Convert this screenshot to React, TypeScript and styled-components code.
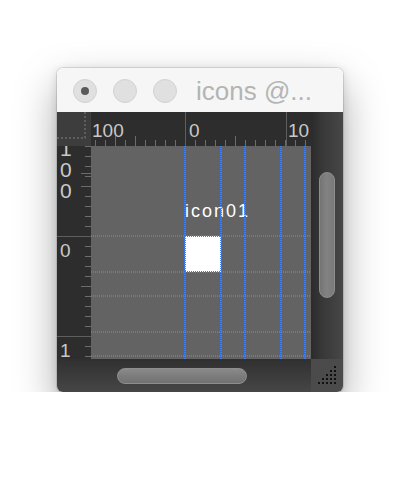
import styled, { createGlobalStyle } from "styled-components";

const ORIGIN_X = 94;
const ORIGIN_Y = 90;
const GUIDES = [0, 36, 60, 96, 120];

const GlobalStyle = createGlobalStyle`
  html, body {
    margin: 0;
    padding: 0;
    background: #ffffff;
  }
  body {
    font-family: "Liberation Sans", Arial, sans-serif;
  }
`;

const Page = styled.div`
  padding: 68px 0 0 57px;
`;

const Window = styled.div`
  width: 286px;
  border-radius: 6px;
  overflow: hidden;
  box-shadow: 0 0 0 1px rgba(0, 0, 0, 0.1), 0 18px 42px rgba(0, 0, 0, 0.34),
    0 2px 10px rgba(0, 0, 0, 0.14);
`;

const TitleBar = styled.div`
  height: 44px;
  box-sizing: border-box;
  padding: 2px 16px 0;
  display: flex;
  align-items: center;
  gap: 16px;
  background: #f6f6f6;
`;

const Light = styled.span<{ $dot?: boolean }>`
  width: 24px;
  height: 24px;
  box-sizing: border-box;
  border-radius: 50%;
  background: #e0e0e0;
  border: 1px solid #d2d2d2;
  display: flex;
  align-items: center;
  justify-content: center;
  flex-shrink: 0;

  &::after {
    content: "";
    display: ${(p) => (p.$dot ? "block" : "none")};
    width: 8px;
    height: 8px;
    border-radius: 50%;
    background: #5a5a5a;
  }
`;

const Title = styled.span`
  margin-left: 3px;
  font-size: 26px;
  line-height: 30px;
  color: #b4b4b4;
  white-space: nowrap;
`;

const Body = styled.div`
  display: grid;
  grid-template-columns: 254px 32px;
  grid-template-rows: 247px 33px;
`;

const Main = styled.div`
  display: grid;
  grid-template-columns: 34px 220px;
  grid-template-rows: 34px 213px;
`;

const Corner = styled.div`
  position: relative;
  background: #3d3d3d;

  &::before {
    content: "";
    position: absolute;
    left: 27px;
    top: 0;
    height: 27px;
    width: 2px;
    background: repeating-linear-gradient(to bottom, #5e5e5e 0 2px, transparent 2px 4px);
  }
  &::after {
    content: "";
    position: absolute;
    left: 0;
    top: 25px;
    width: 29px;
    height: 2px;
    background: repeating-linear-gradient(to right, #5e5e5e 0 2px, transparent 2px 4px);
  }
`;

const HRuler = styled.div`
  position: relative;
  overflow: hidden;
  background: #2d2d2d;
`;

const HTicks = styled.div<{ $len: number; $step: number; $offset: number }>`
  position: absolute;
  left: 0;
  right: 0;
  bottom: 0;
  height: ${(p) => p.$len}px;
  background: repeating-linear-gradient(
    to right,
    #6c6c6c 0 1px,
    transparent 1px ${(p) => p.$step}px
  );
  background-position: ${(p) => p.$offset}px 0;
`;

const HMajor = styled.div<{ $x: number }>`
  position: absolute;
  top: 0;
  bottom: 0;
  left: ${(p) => p.$x}px;
  width: 1px;
  background: #5e5e5e;
`;

const HLabel = styled.span<{ $x: number }>`
  position: absolute;
  top: 9px;
  left: ${(p) => p.$x}px;
  font-size: 19px;
  line-height: 19px;
  color: #c8c8c8;
  white-space: nowrap;
`;

const VRuler = styled.div`
  position: relative;
  overflow: hidden;
  background: #2d2d2d;
`;

const VTicks = styled.div<{ $len: number; $step: number; $offset: number }>`
  position: absolute;
  top: 0;
  bottom: 0;
  right: 0;
  width: ${(p) => p.$len}px;
  background: repeating-linear-gradient(
    to bottom,
    #6c6c6c 0 1px,
    transparent 1px ${(p) => p.$step}px
  );
  background-position: 0 ${(p) => p.$offset}px;
`;

const VMajor = styled.div<{ $y: number }>`
  position: absolute;
  left: 0;
  right: 0;
  top: ${(p) => p.$y}px;
  height: 1px;
  background: #5e5e5e;
`;

const VLabel = styled.span<{ $y: number; $size?: number }>`
  position: absolute;
  left: 3px;
  top: ${(p) => p.$y}px;
  display: flex;
  flex-direction: column;
  font-size: ${(p) => p.$size ?? 19}px;
  line-height: ${(p) => (p.$size ? 21 : 20)}px;
  color: #c8c8c8;
`;

const Canvas = styled.div`
  position: relative;
  overflow: hidden;
  background: #636363;
`;

const GuideV = styled.div<{ $x: number }>`
  position: absolute;
  top: 0;
  bottom: 0;
  left: ${(p) => p.$x - 1}px;
  width: 2px;
  background: repeating-linear-gradient(to bottom, #3f7ef4 0 1px, transparent 1px 2px);
`;

const GuideH = styled.div<{ $y: number }>`
  position: absolute;
  left: 0;
  right: 0;
  top: ${(p) => p.$y - 1}px;
  height: 2px;
  background: repeating-linear-gradient(to right, #3f7ef4 0 1px, transparent 1px 2px);
`;

const Node = styled.div<{ $x: number; $y: number }>`
  position: absolute;
  left: ${(p) => p.$x}px;
  top: ${(p) => p.$y}px;
  width: 36px;
  height: 36px;
  background: #ffffff;
`;

const NodeLabel = styled.span<{ $x: number; $y: number }>`
  position: absolute;
  left: ${(p) => p.$x}px;
  top: ${(p) => p.$y}px;
  font-size: 18px;
  line-height: 20px;
  letter-spacing: 2px;
  color: #ffffff;
  white-space: nowrap;
`;

const VTrack = styled.div`
  box-sizing: border-box;
  padding: 60px 0 0 8px;
  background: linear-gradient(to right, #2b2b2b, #383838 35%, #424242 80%, #474747);
`;

const VThumb = styled.div`
  width: 16px;
  height: 126px;
  box-sizing: border-box;
  border-radius: 8px;
  border: 1px solid #8e8e8e;
  background: linear-gradient(to right, #747474, #828282 45%, #7a7a7a);
`;

const HTrack = styled.div`
  box-sizing: border-box;
  padding: 9px 0 0 60px;
  background: linear-gradient(to bottom, #303030, #3a3a3a 45%, #464646);
`;

const HThumb = styled.div`
  width: 130px;
  height: 16px;
  box-sizing: border-box;
  border-radius: 8px;
  border: 1px solid #8e8e8e;
  background: linear-gradient(to bottom, #8a8a8a, #7c7c7c 50%, #727272);
`;

const Grip = styled.div`
  display: flex;
  align-items: flex-end;
  justify-content: flex-end;
  padding: 0 7px 8px 0;
  background: #4b4b4b;
`;

const GripIcon = () => {
  const dots = [];
  for (let r = 0; r < 5; r++) {
    for (let c = 4 - r; c < 5; c++) {
      dots.push(<rect key={`${r}-${c}`} x={c * 4} y={r * 4} width={2} height={2} fill="#111" />);
    }
  }
  return (
    <svg width="18" height="18" viewBox="0 0 18 18">
      {dots}
    </svg>
  );
};

const Digits = ({ text }: { text: string }) => (
  <>
    {text.split("").map((ch, i) => (
      <span key={i}>{ch}</span>
    ))}
  </>
);

export default function App() {
  return (
    <>
      <GlobalStyle />
      <Page>
        <Window>
          <TitleBar>
            <Light $dot />
            <Light />
            <Light />
            <Title>icons @...</Title>
          </TitleBar>
          <Body>
            <Main>
              <Corner />
              <HRuler>
                <HTicks $len={6} $step={10} $offset={ORIGIN_X % 10} />
                <HTicks $len={10} $step={100} $offset={(ORIGIN_X + 50) % 100} />
                <HMajor $x={ORIGIN_X} />
                <HMajor $x={ORIGIN_X + 101} />
                <HLabel $x={1}>100</HLabel>
                <HLabel $x={ORIGIN_X + 4}>0</HLabel>
                <HLabel $x={ORIGIN_X + 103}>10</HLabel>
              </HRuler>
              <VRuler>
                <VTicks $len={6} $step={10} $offset={ORIGIN_Y % 10} />
                <VTicks $len={10} $step={100} $offset={(ORIGIN_Y + 50) % 100} />
                <VMajor $y={ORIGIN_Y} />
                <VMajor $y={ORIGIN_Y + 100} />
                <VLabel $y={-8} $size={21}>
                  <Digits text="100" />
                </VLabel>
                <VLabel $y={ORIGIN_Y + 5}>
                  <Digits text="0" />
                </VLabel>
                <VLabel $y={ORIGIN_Y + 105}>
                  <Digits text="1" />
                </VLabel>
              </VRuler>
              <Canvas>
                <NodeLabel $x={ORIGIN_X} $y={ORIGIN_Y - 35}>
                  icon01
                </NodeLabel>
                <Node $x={ORIGIN_X} $y={ORIGIN_Y} />
                {GUIDES.map((g) => (
                  <GuideV key={`v${g}`} $x={ORIGIN_X + g} />
                ))}
                {GUIDES.map((g) => (
                  <GuideH key={`h${g}`} $y={ORIGIN_Y + g} />
                ))}
              </Canvas>
            </Main>
            <VTrack>
              <VThumb />
            </VTrack>
            <HTrack>
              <HThumb />
            </HTrack>
            <Grip>
              <GripIcon />
            </Grip>
          </Body>
        </Window>
      </Page>
    </>
  );
}
